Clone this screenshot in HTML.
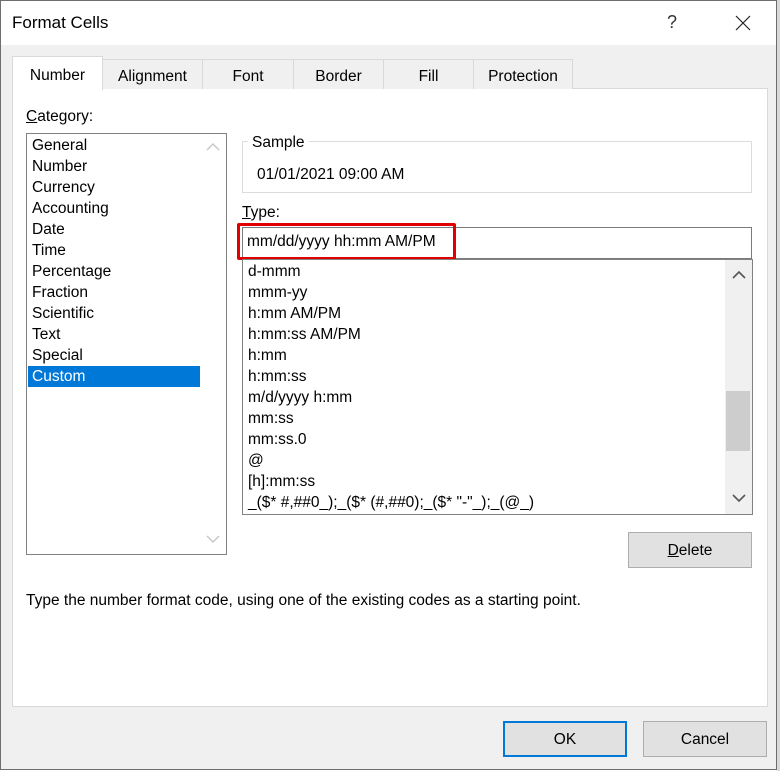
<!DOCTYPE html><html><head><style>
body{margin:0;width:780px;height:771px;background:#fff;position:relative;overflow:hidden;font-family:"Liberation Sans",sans-serif;font-size:15.5px;color:#000}
.a{position:absolute}
.tab{position:absolute;top:59px;height:30px;border:1px solid #d9d9d9;border-bottom:none;background:#f0f0f0;text-align:center;line-height:33px;box-sizing:border-box}
.it{height:21px;line-height:22px;padding-left:5px;white-space:nowrap}
.btn{position:absolute;background:#e1e1e1;border:1px solid #adadad;box-sizing:border-box;text-align:center;line-height:35px}
</style></head><body>
<div class="a" style="left:0;top:0;width:777px;height:770px;border:1px solid #6e6e6e;box-sizing:border-box;background:#f0f0f0"></div>
<div class="a" style="left:1px;top:1px;width:775px;height:44px;background:#fff"></div>
<div class="a" style="left:777px;top:0;width:3px;height:771px;background:#d8d8d8"></div>
<div class="a" style="left:12px;top:13px;font-size:17px">Format Cells</div>
<div class="a" style="left:667px;top:12px;font-size:18px;color:#333">?</div>
<svg class="a" style="left:735px;top:15px" width="16" height="16"><path d="M1 1L15 15M15 1L1 15" stroke="#222" stroke-width="1.2"/></svg>
<div class="a" style="left:12px;top:88px;width:756px;height:619px;background:#fff;border:1px solid #d9d9d9;box-sizing:border-box"></div>
<div class="tab" style="left:102px;width:101px">Alignment</div>
<div class="tab" style="left:202px;width:92px">Font</div>
<div class="tab" style="left:293px;width:91px">Border</div>
<div class="tab" style="left:383px;width:91px">Fill</div>
<div class="tab" style="left:473px;width:100px">Protection</div>
<div class="tab" style="left:12px;top:56px;width:91px;height:34px;background:#fff;line-height:37px;border-color:#d9d9d9">Number</div>
<div class="a" style="left:26px;top:108px"><u>C</u>ategory:</div>
<div class="a" style="left:26px;top:133px;width:201px;height:422px;border:1px solid #828282;box-sizing:border-box;background:#fff">
<div style="padding-top:1px;width:173px">
<div class="it">General</div><div class="it">Number</div><div class="it">Currency</div><div class="it">Accounting</div><div class="it">Date</div><div class="it">Time</div><div class="it">Percentage</div><div class="it">Fraction</div><div class="it">Scientific</div><div class="it">Text</div><div class="it">Special</div><div class="it" style="background:#0078d7;color:#fff;margin-left:1px;padding-left:4px">Custom</div>
</div>
<svg class="a" style="left:179px;top:8px" width="14" height="10"><path d="M1 8L7 2L13 8" stroke="#c8c8c8" fill="none" stroke-width="1.5"/></svg>
<svg class="a" style="left:179px;top:400px" width="14" height="10"><path d="M1 2L7 8L13 2" stroke="#c8c8c8" fill="none" stroke-width="1.5"/></svg>
</div>
<div class="a" style="left:242px;top:141px;width:510px;height:52px;border:1px solid #dcdcdc;box-sizing:border-box"></div>
<div class="a" style="left:248px;top:134px;background:#fff;padding:0 4px">Sample</div>
<div class="a" style="left:257px;top:166px">01/01/2021 09:00 AM</div>
<div class="a" style="left:242px;top:204px"><u>T</u>ype:</div>
<div class="a" style="left:242px;top:227px;width:510px;height:32px;border:1px solid #7a7a7a;box-sizing:border-box"></div>
<div class="a" style="left:237px;top:223px;width:219px;height:37px;border:3px solid #e00000;border-radius:2px;box-sizing:border-box"></div>
<div class="a" style="left:247px;top:233px">mm/dd/yyyy hh:mm AM/PM</div>
<div class="a" style="left:242px;top:259px;width:511px;height:256px;border:1px solid #828282;box-sizing:border-box;overflow:hidden">
<div style="padding-top:1px">
<div class="it">d-mmm</div><div class="it">mmm-yy</div><div class="it">h:mm AM/PM</div><div class="it">h:mm:ss AM/PM</div><div class="it">h:mm</div><div class="it">h:mm:ss</div><div class="it">m/d/yyyy h:mm</div><div class="it">mm:ss</div><div class="it">mm:ss.0</div><div class="it">@</div><div class="it">[h]:mm:ss</div><div class="it">_($* #,##0_);_($* (#,##0);_($* "-"_);_(@_)</div>
</div>
<div class="a" style="left:482px;top:0;width:27px;height:254px;background:#f0f0f0"></div>
<div class="a" style="left:483px;top:131px;width:24px;height:60px;background:#cdcdcd"></div>
<svg class="a" style="left:489px;top:10px" width="14" height="10"><path d="M1 8L7 2L13 8" stroke="#555" fill="none" stroke-width="1.6"/></svg>
<svg class="a" style="left:489px;top:233px" width="14" height="10"><path d="M1 2L7 8L13 2" stroke="#555" fill="none" stroke-width="1.6"/></svg>
</div>
<div class="btn" style="left:628px;top:532px;width:124px;height:36px"><u>D</u>elete</div>
<div class="a" style="left:26px;top:592px">Type the number format code, using one of the existing codes as a starting point.</div>
<div class="btn" style="left:503px;top:721px;width:124px;height:36px;border:2px solid #0078d7;line-height:33px">OK</div>
<div class="btn" style="left:643px;top:721px;width:124px;height:36px">Cancel</div>
</body></html>
